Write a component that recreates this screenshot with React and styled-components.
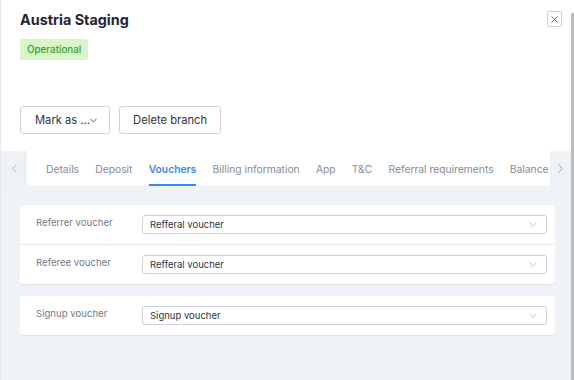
import React from "react";
import styled, { createGlobalStyle } from "styled-components";

const GlobalStyle = createGlobalStyle`
  html, body {
    margin: 0;
    padding: 0;
    background: #ffffff;
  }
  body {
    font-family: Inter, "Noto Sans", "Liberation Sans", sans-serif;
    -webkit-font-smoothing: antialiased;
  }
  * {
    box-sizing: border-box;
  }
`;

const Frame = styled.div`
  width: 574px;
  height: 380px;
  display: flex;
  overflow: hidden;
  background: #ffffff;
`;

const Panel = styled.div`
  flex: 1;
  min-width: 0;
  display: flex;
  flex-direction: column;
  border-left: 1px solid #e4e7eb;
`;

const ScrollEdge = styled.div`
  width: 3px;
  padding-top: 13px;
  display: flex;
  justify-content: flex-end;
`;

const ScrollLine = styled.div`
  width: 2px;
  flex: 1;
  background: #bdbdbd;
`;

const Header = styled.div`
  padding: 10px 9px 0 19px;
`;

const TitleRow = styled.div`
  display: flex;
  justify-content: space-between;
  align-items: flex-start;
`;

const Title = styled.h1`
  margin: 0;
  font-size: 14.4px;
  line-height: 20px;
  font-weight: 700;
  color: #1f2533;
`;

const CloseButton = styled.button`
  width: 15px;
  height: 16px;
  margin-top: 1px;
  padding: 0;
  border: 1px solid #c6cfdb;
  border-radius: 2px;
  background: #ffffff;
  display: flex;
  align-items: center;
  justify-content: center;
`;

const Badge = styled.span`
  display: inline-block;
  margin-top: 9px;
  height: 21px;
  line-height: 21px;
  padding: 0 7px;
  font-size: 9.8px;
  font-weight: 500;
  color: #3c9a2c;
  background: #d9f7c6;
  border-radius: 3px;
`;

const Actions = styled.div`
  display: flex;
  gap: 9px;
  margin-top: 46px;
`;

const ActionButton = styled.button`
  height: 28px;
  padding: ${(p) => (p.$menu ? "0 12px 0 14px" : "0 13px")};
  border: 1px solid #cdd4de;
  border-radius: 3px;
  background: #ffffff;
  font-family: inherit;
  font-size: 11.2px;
  color: #2f3440;
  display: flex;
  align-items: center;
`;

const TabBar = styled.div`
  margin-top: 17px;
  height: 35px;
  display: flex;
  background: #ffffff;
`;

const ArrowBox = styled.div`
  width: ${(p) => p.$w}px;
  flex-shrink: 0;
  background: #eef2f7;
  display: flex;
  align-items: center;
  justify-content: center;
`;

const TabList = styled.div`
  flex: 1;
  min-width: 0;
  overflow: hidden;
  display: flex;
  gap: 16.2px;
  padding-left: 19px;
  white-space: nowrap;
`;

const Tab = styled.div`
  flex-shrink: 0;
  display: flex;
  align-items: center;
  font-size: 10.3px;
  color: ${(p) => (p.$active ? "#3d86f5" : "#858b96")};
  font-weight: ${(p) => (p.$active ? 600 : 400)};
  border-bottom: 2px solid ${(p) => (p.$active ? "#3d86f5" : "transparent")};
  padding-top: 2px;
`;

const Body = styled.div`
  flex: 1;
  background: #eff2f7;
  padding: 19px 16px 0 19px;
  display: flex;
  flex-direction: column;
  gap: 12px;
`;

const Card = styled.div`
  background: #ffffff;
  border-radius: 3px;
  box-shadow: 0 1px 0 #dde2e9;
`;

const Row = styled.div`
  display: grid;
  grid-template-columns: 106px 1fr;
  align-items: start;
  padding: 10px 8px 10px 16px;
  & + & {
    border-top: 1px solid #e6e9ee;
  }
`;

const Label = styled.div`
  font-size: 9.6px;
  line-height: 15px;
  color: #737987;
`;

const Select = styled.div`
  height: 19px;
  border: 1px solid #c9d1dd;
  border-radius: 3px;
  padding: 0 9px 0 7px;
  display: flex;
  align-items: center;
  justify-content: space-between;
  font-size: 9.5px;
  color: #2f3440;
`;

const Chevron = ({ color = "#b9c0cb", w = 8, h = 5 }) => (
  <svg width={w} height={h} viewBox="0 0 8 5" fill="none">
    <path d="M0.5 0.5 L4 4.3 L7.5 0.5" stroke={color} strokeWidth="0.9" />
  </svg>
);

const SideArrow = ({ dir, color }) => (
  <svg width="5" height="9" viewBox="0 0 5 9" fill="none">
    <path
      d={dir === "left" ? "M4.5 0.5 L0.7 4.5 L4.5 8.5" : "M0.5 0.5 L4.3 4.5 L0.5 8.5"}
      stroke={color}
      strokeWidth="1"
    />
  </svg>
);

const tabs = [
  "Details",
  "Deposit",
  "Vouchers",
  "Billing information",
  "App",
  "T&C",
  "Referral requirements",
  "Balance",
];

const voucherCards = [
  [
    { label: "Referrer voucher", value: "Refferal voucher" },
    { label: "Referee voucher", value: "Refferal voucher" },
  ],
  [{ label: "Signup voucher", value: "Signup voucher" }],
];

export default function App() {
  return (
    <>
      <GlobalStyle />
      <Frame>
        <Panel>
          <Header>
            <TitleRow>
              <Title>Austria Staging</Title>
              <CloseButton aria-label="close">
                <svg width="7" height="7" viewBox="0 0 7 7">
                  <path d="M0.5 0.5 L6.5 6.5 M6.5 0.5 L0.5 6.5" stroke="#5b6270" strokeWidth="0.9" />
                </svg>
              </CloseButton>
            </TitleRow>
            <Badge>Operational</Badge>
            <Actions>
              <ActionButton $menu>
                Mark as ...
                <Chevron color="#2f3440" w={7} h={5} />
              </ActionButton>
              <ActionButton>Delete branch</ActionButton>
            </Actions>
          </Header>

          <TabBar>
            <ArrowBox $w={26}>
              <SideArrow dir="left" color="#b7bdc6" />
            </ArrowBox>
            <TabList>
              {tabs.map((t) => (
                <Tab key={t} $active={t === "Vouchers"}>
                  {t}
                </Tab>
              ))}
            </TabList>
            <ArrowBox $w={21}>
              <SideArrow dir="right" color="#9aa1ab" />
            </ArrowBox>
          </TabBar>

          <Body>
            {voucherCards.map((rows, i) => (
              <Card key={i}>
                {rows.map((r) => (
                  <Row key={r.label}>
                    <Label>{r.label}</Label>
                    <Select>
                      <span>{r.value}</span>
                      <Chevron />
                    </Select>
                  </Row>
                ))}
              </Card>
            ))}
          </Body>
        </Panel>
        <ScrollEdge>
          <ScrollLine />
        </ScrollEdge>
      </Frame>
    </>
  );
}
